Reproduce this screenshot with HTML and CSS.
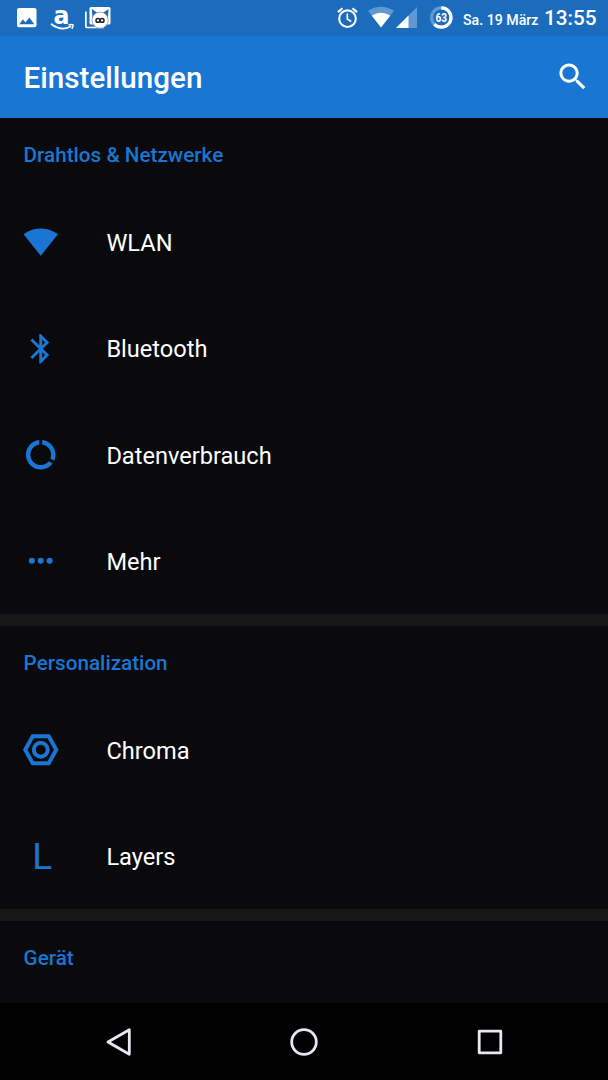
FILE: index.html
```html
<!DOCTYPE html>
<html lang="de">
<head>
    <meta charset="UTF-8">
    <meta name="viewport" content="width=device-width, initial-scale=1.0">
    <title>Einstellungen</title>
    <link rel="stylesheet" href="styles.css">
</head>
<body>

    <div class="status-bar">
        <div class="notifications">
            <svg width="20" height="36" viewBox="0 0 20 36">
                <path fill="#fff" fill-rule="evenodd" d="M2 8h15.500a2 2 0 0 1 2 2v15.300a2 2 0 0 1-2 2H2a2 2 0 0 1-2-2V10a2 2 0 0 1 2-2zM2.300 24.300h15L12.300 17.600l-3.800 4.800-2.600-3.200z"/>
            </svg>
            <svg class="amazon" width="25" height="36" viewBox="0 0 25 36">
                <text class="amazon-letter" x="3.500" y="24" textLength="16" lengthAdjust="spacingAndGlyphs">a</text>
                <path fill="none" stroke="#fff" stroke-width="1.800" stroke-linecap="round" d="M1.500 24.300Q11 31.500 20.500 26.500"/>
                <path fill="none" stroke="#fff" stroke-width="1.500" d="M18.500 25q3.500-.8 4.600 0 .3 1.700-1.400 3.700"/>
            </svg>
            <svg class="gallery" width="26" height="36" viewBox="0 0 26 36">
                <path fill="none" stroke="#fff" stroke-width="1.700" d="M.9 11.500V26.500q0 1 1 1H19"/>
                <rect x="4.500" y="7" width="21" height="17.500" rx="1.500" fill="#fff"/>
                <path fill="#1c6cbe" d="M6.800 9l5.200 3.600h6.400L23.600 9l-.8 10H7.600z"/>
                <circle cx="15.100" cy="20.200" r="8.100" fill="#fff" stroke="#8a8f98" stroke-width=".7"/>
                <circle cx="12.900" cy="20.400" r="1.900" fill="none" stroke="#222" stroke-width="1.500"/>
                <circle cx="17.100" cy="20.400" r="1.900" fill="none" stroke="#222" stroke-width="1.500"/>
            </svg>
        </div>
        <div class="system">
            <svg width="22" height="36" viewBox="0 0 22 36">
                <g fill="none" stroke="#fff" stroke-width="2.100">
                    <circle cx="10.500" cy="18.700" r="8.300"/>
                    <path d="M10.300 13.500v5.500l3.900 2.500" stroke-width="1.700"/>
                    <path d="M.9 12.100l4.600-3.800M15.500 8.300l4.600 3.800"/>
                </g>
            </svg>
            <svg class="wifi" width="27" height="36" viewBox="0 0 27 36">
                <path fill="#fff" fill-opacity=".3" d="M13 27.500L0 10.800Q13 2.800 26 10.800z"/>
                <path fill="#fff" d="M13 27.500L3.700 15.600Q13 9.800 22.300 15.600z"/>
            </svg>
            <svg class="signal" width="21" height="36" viewBox="0 0 21 36">
                <path fill="#fff" fill-opacity=".3" d="M0 28L21 7v21z"/>
                <path fill="#fff" d="M0 28l12.500-12.500V28z"/>
            </svg>
            <svg class="battery" width="23" height="36" viewBox="0 0 23 36">
                <g fill="none" stroke="#fff" stroke-width="3.200">
                    <circle cx="11.300" cy="17.500" r="9.700" stroke-opacity=".3"/>
                    <circle cx="11.300" cy="17.500" r="9.700" pathLength="100" stroke-dasharray="63 37" transform="rotate(-90 11.300 17.500)"/>
                </g>
                <text class="battery-level" x="11.300" y="22.200" textLength="11.500" lengthAdjust="spacingAndGlyphs">63</text>
            </svg>
            <span class="date">Sa. 19 März</span>
            <span class="time">13:55</span>
        </div>
    </div>

    <header class="toolbar">
        <h1>Einstellungen</h1>
        <svg class="icon" viewBox="0 0 24 24">
            <path d="M15.500 14h-.79l-.28-.27C15.410 12.590 16 11.110 16 9.500 16 5.910 13.090 3 9.500 3S3 5.910 3 9.500 5.910 16 9.500 16c1.610 0 3.090-.59 4.230-1.570l.27.28v.79l5 4.990L20.490 19l-4.990-5zm-6 0C7.010 14 5 11.990 5 9.500S7.010 5 9.500 5 14 7.010 14 9.500 11.990 14 9.500 14z"/>
        </svg>
    </header>

    <main class="settings">
        <section>
            <h2>Drahtlos &amp; Netzwerke</h2>
            <div class="row">
                <svg class="icon" viewBox="0 0 24 24">
                    <path d="M12.010 21.490L23.640 7c-.45-.34-4.930-4-11.640-4C5.280 3 .81 6.660.36 7l11.630 14.490.01.01.01-.01z"/>
                </svg>
                <span class="label">WLAN</span>
            </div>
            <div class="row">
                <svg class="icon" viewBox="0 0 24 24">
                    <path d="M17.710 7.710L12 2h-1v7.590L6.410 5 5 6.410 10.590 12 5 17.590 6.410 19 11 14.410V22h1l5.710-5.710-4.300-4.290 4.300-4.290zM13 5.830l1.880 1.880L13 9.590V5.830zm1.880 10.460L13 18.170v-3.760l1.880 1.880z"/>
                </svg>
                <span class="label">Bluetooth</span>
            </div>
            <div class="row">
                <svg class="icon" viewBox="0 0 24 24">
                    <path d="M13 2.050v3.030c3.390.49 6 3.390 6 6.920 0 .9-.18 1.750-.48 2.540l2.600 1.530c.56-1.240.88-2.620.88-4.070 0-5.180-3.950-9.450-9-9.950zM12 19c-3.870 0-7-3.130-7-7 0-3.530 2.610-6.430 6-6.920V2.050c-5.060.5-9 4.760-9 9.950 0 5.520 4.470 10 9.990 10 3.310 0 6.240-1.610 8.060-4.090l-2.600-1.530C16.170 17.980 14.210 19 12 19z"/>
                </svg>
                <span class="label">Datenverbrauch</span>
            </div>
            <div class="row">
                <svg class="icon" viewBox="0 0 24 24">
                    <circle cx="6" cy="12" r="2.050"/>
                    <circle cx="12" cy="12" r="2.050"/>
                    <circle cx="18" cy="12" r="2.050"/>
                </svg>
                <span class="label">Mehr</span>
            </div>
        </section>

        <section>
            <h2>Personalization</h2>
            <div class="row">
                <svg class="icon outline" viewBox="0 0 24 24">
                    <path d="M1.500 12L6.600 2.900h10.800L22.500 12l-5.100 9.100H6.600z"/>
                    <circle cx="12" cy="12" r="4.700"/>
                </svg>
                <span class="label">Chroma</span>
            </div>
            <div class="row">
                <span class="icon letter">L</span>
                <span class="label">Layers</span>
            </div>
        </section>

        <section>
            <h2>Gerät</h2>
        </section>
    </main>

    <nav class="nav-bar">
        <svg width="30" height="30" viewBox="0 0 30 30">
            <path d="M26.300 2.700v24.600L5 15z"/>
        </svg>
        <svg width="30" height="30" viewBox="0 0 30 30">
            <circle cx="15" cy="15" r="12.300"/>
        </svg>
        <svg width="30" height="30" viewBox="0 0 30 30">
            <rect x="4.200" y="4.200" width="21.600" height="21.600"/>
        </svg>
    </nav>

</body>
</html>
```
FILE: styles.css
```css
body {
    font-family: Roboto, sans-serif;
    background-color: #0a0a0c;
    color: #fff;
    margin: 0;
    height: 1080px;
    display: flex;
    flex-direction: column;
    overflow: hidden;
}
svg {
    display: block;
    flex-shrink: 0;
}
h1, h2 {
    margin: 0;
    font-weight: 500;
}

/* status bar */
.status-bar {
    height: 36px;
    flex-shrink: 0;
    display: flex;
    justify-content: space-between;
    background-color: #1c6cbe;
    padding: 0 11.5px 0 17px;
}
.notifications,
.system {
    display: flex;
}
.amazon {
    margin-left: 13px;
}
.amazon-letter {
    font-family: "DejaVu Sans", sans-serif;
    font-size: 25px;
    font-weight: 700;
    fill: #fff;
}
.gallery {
    margin-left: 10px;
}
.wifi {
    margin-left: 9px;
}
.signal {
    margin-left: 1px;
}
.battery {
    margin-left: 13px;
}
.battery-level {
    font-size: 13.5px;
    font-weight: 700;
    fill: #fff;
    text-anchor: middle;
}
.date,
.time {
    font-weight: 500;
    line-height: 37px;
    white-space: nowrap;
}
.date {
    font-size: 14.2px;
    margin-left: 10px;
    padding-top: 2px;
}
.time {
    font-size: 20.7px;
    margin-left: 5.5px;
}

/* toolbar */
.toolbar {
    height: 82px;
    flex-shrink: 0;
    display: flex;
    align-items: center;
    justify-content: space-between;
    background-color: #1976d3;
    box-sizing: border-box;
    padding: 0 18px 0 23.6px;
}
.toolbar h1 {
    font-size: 29.6px;
    padding-top: 1px;
}
.icon {
    width: 35.5px;
    height: 35.5px;
    fill: currentColor;
}

/* settings list */
.settings {
    flex: 1;
    min-height: 0;
    overflow: hidden;
    padding-top: 0.4px;
}
section + section {
    border-top: 12px solid #171717;
}
h2 {
    font-size: 20.7px;
    line-height: 70.6px;
    padding: 1.6px 23.6px 0;
    margin-bottom: -1.6px;
    color: #1976d3;
}
.row {
    height: 106.3px;
    display: flex;
    align-items: center;
    gap: 47.5px;
    padding: 0 23.4px;
}
.label {
    font-size: 23.6px;
    padding-top: 2px;
}
.row .icon {
    color: #1976d3;
}
.outline {
    fill: none;
    stroke: currentColor;
    stroke-width: 2.7;
}
.row .letter {
    box-sizing: border-box;
    font-size: 37px;
    line-height: 37.5px;
    text-align: center;
    padding-left: 2px;
}

/* navigation bar */
.nav-bar {
    height: 77px;
    flex-shrink: 0;
    display: flex;
    align-items: center;
    justify-content: space-between;
    box-sizing: border-box;
    padding: 1px 103px 0;
    background-color: #000;
    fill: none;
    stroke: #e4e8f0;
    stroke-width: 2.8;
    stroke-linejoin: round;
}
```
